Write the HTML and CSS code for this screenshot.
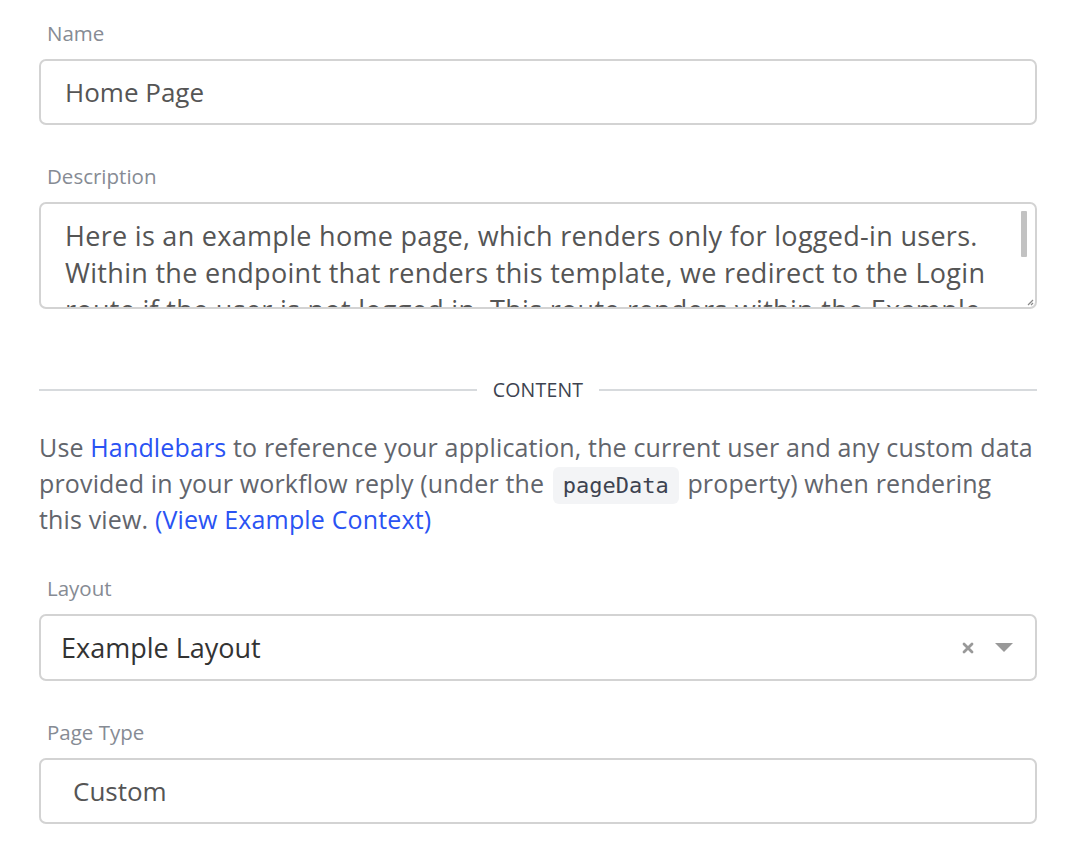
FILE: index.html
```html
<!DOCTYPE html>
<html lang="en">
<head>
<meta charset="utf-8">
<title>Page settings</title>
<link rel="stylesheet" href="styles.css">
</head>
<body>
<div class="form">
  <div class="field">
    <div class="label">Name</div>
    <div class="input"><span class="value">Home Page</span></div>
  </div>

  <div class="field">
    <div class="label">Description</div>
    <div class="textarea">
      <div class="ta-text">Here is an example home page, which renders only for logged-in users. Within the endpoint that renders this template, we redirect to the Login route if the user is not logged in. This route renders within the Example Layout.</div>
      <div class="ta-thumb"></div>
      <svg class="ta-grip" width="8" height="8" viewBox="0 0 8 8"><path d="M7 2 L2 7 M7 5 L5 7" stroke="#888" stroke-width="1.2" fill="none"/></svg>
    </div>
  </div>

  <div class="divider"><span>CONTENT</span></div>

  <p class="help">Use <a href="#">Handlebars</a> to reference your application, the current user and any custom data provided in your workflow reply (under the <code>pageData</code> property) when rendering this view. <a href="#">(View Example Context)</a></p>

  <div class="field">
    <div class="label">Layout</div>
    <div class="select">
      <span class="select-value">Example Layout</span>
      <span class="select-icons">
        <svg class="clear" width="12" height="12" viewBox="0 0 12 12"><path d="M2 2 L10 10 M10 2 L2 10" stroke="#999" stroke-width="2.8" stroke-linecap="round"/></svg>
        <svg class="caret" width="18" height="9" viewBox="0 0 18 9"><path d="M0 0 H18 L9 9 Z" fill="#999"/></svg>
      </span>
    </div>
  </div>

  <div class="field">
    <div class="label">Page Type</div>
    <div class="input"><span class="value value-type">Custom</span></div>
  </div>
</div>
</body>
</html>
```

FILE: styles.css
```css
html, body {
  margin: 0;
  padding: 0;
  background: #ffffff;
}

body {
  font-family: "Open Sans", "Noto Sans", sans-serif;
}

.form {
  width: 998px;
  padding: 21px 0 0 39px;
}

.field {
  margin-bottom: 39px;
}

.label {
  font-size: 20.5px;
  line-height: 24px;
  color: #868b94;
  padding-left: 8px;
  margin-bottom: 14px;
}

.input,
.select,
.textarea {
  box-sizing: border-box;
  border: 2px solid #d3d3d3;
  border-radius: 7px;
  background: #fff;
}

.input {
  height: 66px;
  display: flex;
  align-items: center;
  padding-left: 24px;
}

.value {
  font-size: 26px;
  color: #555555;
}

.value-type {
  padding-left: 8px;
}

.textarea {
  position: relative;
  height: 107px;
  overflow: hidden;
  padding: 13px 40px 0 24px;
}

.ta-text {
  font-size: 27px;
  letter-spacing: 0.3px;
  line-height: 37px;
  color: #555555;
}

.ta-thumb {
  position: absolute;
  top: 7px;
  right: 8px;
  width: 6px;
  height: 46px;
  background: #c2c2c2;
  border-radius: 1px;
}

.ta-grip {
  position: absolute;
  right: 1px;
  bottom: 1px;
}

.divider {
  display: flex;
  align-items: center;
  gap: 16px;
  margin: 69px 0 27px;
  font-size: 19.5px;
  font-weight: 500;
  line-height: 24px;
  color: #3d4350;
  letter-spacing: 0.2px;
}

.divider::before,
.divider::after {
  content: "";
  flex: 1;
  height: 2px;
  background: #d7dadd;
}

.help {
  margin: 0 0 39px;
  font-size: 25px;
  letter-spacing: 0.15px;
  line-height: 36px;
  color: #62656c;
}

.help a {
  color: #2a53f3;
  text-decoration: none;
}

.help code {
  font-family: "DejaVu Sans Mono", "Liberation Mono", monospace;
  font-size: 22px;
  line-height: 1;
  letter-spacing: 0;
  color: #3d4350;
  background: #f3f4f6;
  border-radius: 6px;
  padding: 6px 10px;
  margin: 0 2px;
}

.select {
  height: 67px;
  display: flex;
  align-items: center;
  justify-content: space-between;
  padding: 0 22px 0 20px;
}

.select-value {
  font-size: 27px;
  color: #333333;
}

.select-icons {
  display: flex;
  align-items: center;
  gap: 21px;
}
```
